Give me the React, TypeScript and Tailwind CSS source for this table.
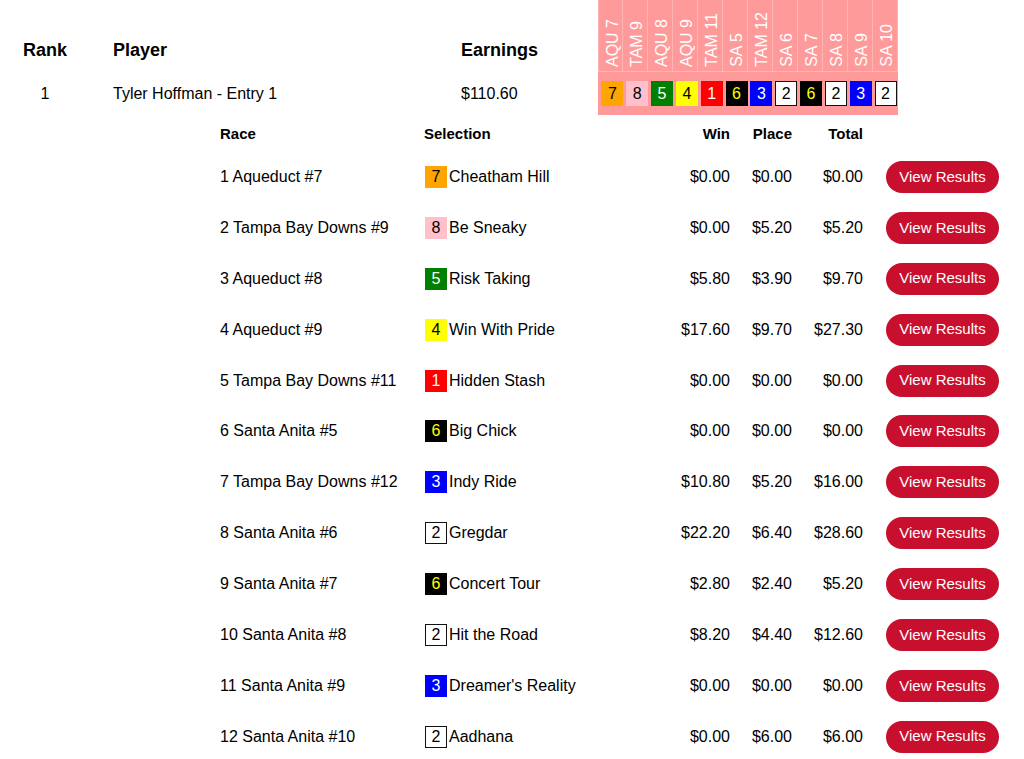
import React from 'react';

interface Pick {
  race: string;
  short: string;
  num: string;
  horse: string;
  win: string;
  place: string;
  total: string;
}

const picks: Pick[] = [
  { race: '1 Aqueduct #7', short: 'AQU 7', num: '7', horse: 'Cheatham Hill', win: '$0.00', place: '$0.00', total: '$0.00' },
  { race: '2 Tampa Bay Downs #9', short: 'TAM 9', num: '8', horse: 'Be Sneaky', win: '$0.00', place: '$5.20', total: '$5.20' },
  { race: '3 Aqueduct #8', short: 'AQU 8', num: '5', horse: 'Risk Taking', win: '$5.80', place: '$3.90', total: '$9.70' },
  { race: '4 Aqueduct #9', short: 'AQU 9', num: '4', horse: 'Win With Pride', win: '$17.60', place: '$9.70', total: '$27.30' },
  { race: '5 Tampa Bay Downs #11', short: 'TAM 11', num: '1', horse: 'Hidden Stash', win: '$0.00', place: '$0.00', total: '$0.00' },
  { race: '6 Santa Anita #5', short: 'SA 5', num: '6', horse: 'Big Chick', win: '$0.00', place: '$0.00', total: '$0.00' },
  { race: '7 Tampa Bay Downs #12', short: 'TAM 12', num: '3', horse: 'Indy Ride', win: '$10.80', place: '$5.20', total: '$16.00' },
  { race: '8 Santa Anita #6', short: 'SA 6', num: '2', horse: 'Gregdar', win: '$22.20', place: '$6.40', total: '$28.60' },
  { race: '9 Santa Anita #7', short: 'SA 7', num: '6', horse: 'Concert Tour', win: '$2.80', place: '$2.40', total: '$5.20' },
  { race: '10 Santa Anita #8', short: 'SA 8', num: '2', horse: 'Hit the Road', win: '$8.20', place: '$4.40', total: '$12.60' },
  { race: '11 Santa Anita #9', short: 'SA 9', num: '3', horse: "Dreamer's Reality", win: '$0.00', place: '$0.00', total: '$0.00' },
  { race: '12 Santa Anita #10', short: 'SA 10', num: '2', horse: 'Aadhana', win: '$0.00', place: '$6.00', total: '$6.00' },
];

// saddle cloth colours by post number
const badgeColors: Record<string, string> = {
  '1': 'bg-[#ff0000] text-white',
  '2': 'bg-white text-black border-[1.5px] border-[#111]',
  '3': 'bg-[#0000ff] text-white',
  '4': 'bg-[#ffff00] text-black',
  '5': 'bg-[#008000] text-white',
  '6': 'bg-black text-[#ffff00]',
  '7': 'bg-[#ffa500] text-black',
  '8': 'bg-[#ffc0cb] text-black',
};

const Badge: React.FC<{ num: string; className?: string }> = ({ num, className }) => (
  <div className={`flex items-center justify-center text-[16px] leading-none ${badgeColors[num]} ${className ?? ''}`}>
    {num}
  </div>
);

const App: React.FC = () => {
  return (
    <div className="min-h-screen bg-white text-black" style={{ fontFamily: '"Liberation Sans", Arial, sans-serif' }}>
      {/* header row */}
      <div className="flex h-[72px]">
        <div className="w-[90px] pt-[37px] text-center text-[18px] font-bold">Rank</div>
        <div className="w-[371px] pl-[23px] pt-[37px] text-[18px] font-bold">Player</div>
        <div className="w-[137px] pt-[37px] text-[18px] font-bold">Earnings</div>
        <div className="flex border-b border-[#ffb5b5] bg-[#ff9a9a]">
          {picks.map((p) => (
            <div key={p.short} className="flex h-full w-[25px] items-end justify-center border-r border-[#ffb5b5] pb-[4px] pl-[4px] first:border-l">
              <span className="rotate-180 text-[16px] leading-[18px] whitespace-nowrap text-white [writing-mode:vertical-rl]">
                {p.short}
              </span>
            </div>
          ))}
        </div>
      </div>

      {/* entry row */}
      <div className="flex h-[43px] items-stretch">
        <div className="flex w-[90px] items-center justify-center pt-[1px] text-[16px]">1</div>
        <div className="flex w-[371px] items-center pl-[23px] pt-[1px] text-[16px]">Tyler Hoffman - Entry 1</div>
        <div className="flex w-[137px] items-center pt-[1px] text-[16px]">$110.60</div>
        <div className="flex w-[300px] items-center bg-[#ff9a9a] pl-[2px]">
          {picks.map((p) => (
            <div key={p.short} className="flex w-[25px] justify-center">
              <Badge num={p.num} className="h-[25px] w-[22px]" />
            </div>
          ))}
        </div>
      </div>

      {/* race breakdown */}
      <div className="pl-[220px] pt-[1px]">
        <div className="flex h-[35.5px] items-center text-[15px] font-bold">
          <div className="w-[204px]">Race</div>
          <div className="w-[200px]">Selection</div>
          <div className="w-[106px] text-right">Win</div>
          <div className="w-[62px] text-right">Place</div>
          <div className="w-[71px] text-right">Total</div>
        </div>
        {picks.map((p) => (
          <div key={p.race} className="flex h-[50.9px] items-center text-[16px]">
            <div className="w-[204px]">{p.race}</div>
            <div className="flex w-[200px] items-center gap-[2px] pl-[1px]">
              <Badge num={p.num} className="h-[22px] w-[22px]" />
              <span>{p.horse}</span>
            </div>
            <div className="w-[106px] text-right">{p.win}</div>
            <div className="w-[62px] text-right">{p.place}</div>
            <div className="w-[71px] text-right">{p.total}</div>
            <button className="ml-[23px] h-[32px] w-[113px] rounded-full bg-[#c8102e] text-[15px] text-white">
              View Results
            </button>
          </div>
        ))}
      </div>
    </div>
  );
};

export default App;
